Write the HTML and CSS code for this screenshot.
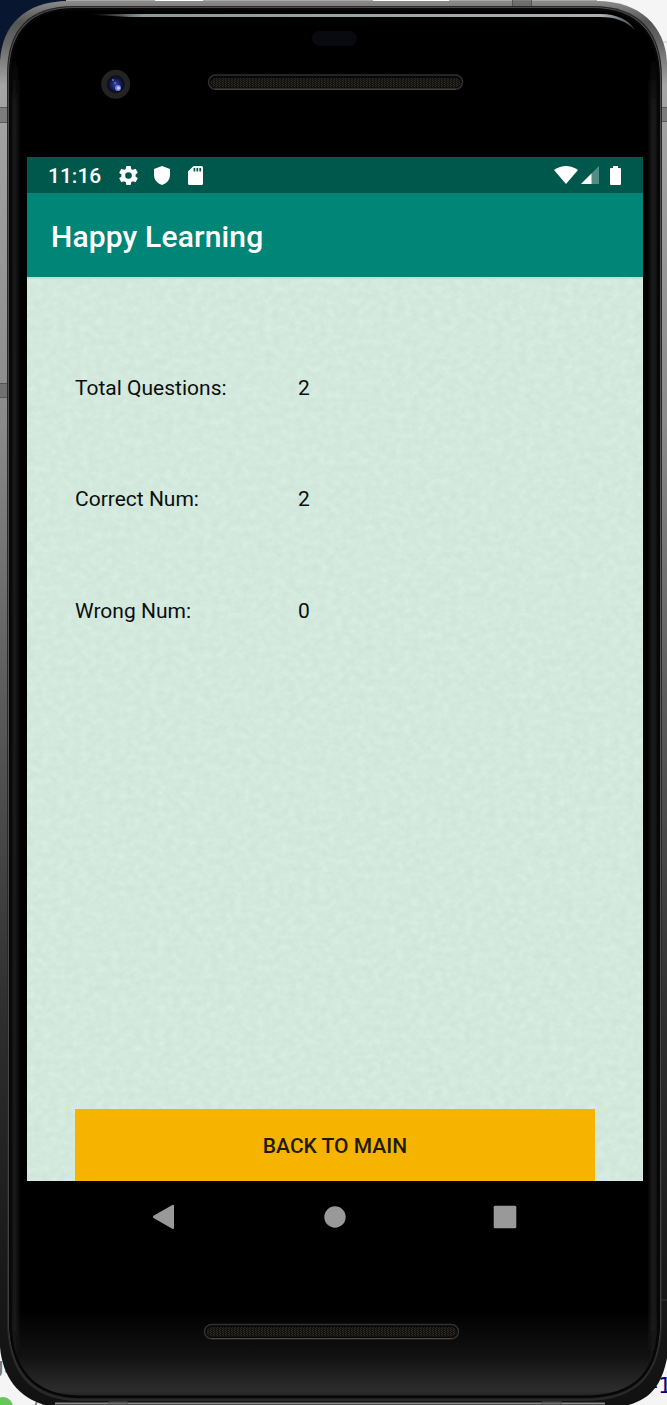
FILE: index.html
```html
<!DOCTYPE html>
<html lang="en">
<head>
<meta charset="utf-8">
<title>Happy Learning</title>
<link rel="stylesheet" href="styles.css">
</head>
<body>
<div class="device">
  <svg class="frame" viewBox="0 0 667 1405" aria-hidden="true">
    <defs>
      <linearGradient id="metal" x1="0" y1="0" x2="0" y2="1">
        <stop offset="0" stop-color="#8b8b8b"/><stop offset=".015" stop-color="#555"/><stop offset=".03" stop-color="#666"/><stop offset=".06" stop-color="#a5a5a5"/><stop offset=".3" stop-color="#8a8a8a"/><stop offset=".5" stop-color="#5a5a5a"/><stop offset=".72" stop-color="#2e2e2e"/><stop offset=".9" stop-color="#191919"/><stop offset="1" stop-color="#111"/>
      </linearGradient>
      <linearGradient id="rim" x1="0" y1="0" x2="0" y2="1">
        <stop offset="0" stop-color="#555"/><stop offset=".5" stop-color="#666"/><stop offset=".95" stop-color="#444"/><stop offset="1" stop-color="#1c1c1c"/>
      </linearGradient>
      <linearGradient id="chin" x1="0" y1="0" x2="0" y2="1">
        <stop offset="0" stop-color="#000"/><stop offset=".5" stop-color="#111"/><stop offset=".9" stop-color="#2d2d2d"/><stop offset="1" stop-color="#191919"/>
      </linearGradient>
      <linearGradient id="shine" gradientUnits="userSpaceOnUse" x1="88" y1="0" x2="636" y2="0">
        <stop offset="0" stop-color="#8d989a" stop-opacity="0"/><stop offset=".1" stop-color="#8d989a"/><stop offset=".94" stop-color="#aab0b2"/><stop offset="1" stop-color="#8d989a" stop-opacity=".5"/>
      </linearGradient>
      <radialGradient id="lens"><stop offset="0" stop-color="#3646a0"/><stop offset=".6" stop-color="#151c52"/><stop offset="1" stop-color="#080a18"/></radialGradient>
      <pattern id="mesh" width="3" height="2" patternUnits="userSpaceOnUse"><rect width="3" height="2" fill="#14120f"/><rect width="1" height="1" fill="#302d28"/><rect x="1" y="1" width="1" height="1" fill="#2b2924"/></pattern>
      <filter id="soft" filterUnits="userSpaceOnUse" x="0" y="0" width="667" height="1405"><feGaussianBlur stdDeviation="2.500 20"/></filter>
      <clipPath id="glass"><path id="inner" d="M9 74C9 31 31 8 74 8H593C637 8 660 33 660 78V1320C660 1372 638 1398 584 1398H80C33 1398 9 1370 9 1320Z"/></clipPath>
    </defs>
    <rect width="667" height="1405" fill="#f5f5f5"/>
    <path d="M0 0H70V3L0 65Z" fill="#08172f"/>
    <path d="M66 0H597V2H66Z" fill="#a9a9a9"/>
    <path d="M155 0H203V1H155ZM373 0H449V1H373Z" fill="#fff"/>
    <path d="M655 42H667" stroke="#ccc"/>
    <circle cx="3" cy="1407" r="10" fill="#67c65a"/>
    <text class="behind-grey" x="-10" y="1373">gs</text>
    <text class="behind-grey" x="33" y="1409">//</text>
    <text class="behind-code" x="650" y="1393">-1</text>
    <path d="M0 61C2 25 25 2 66 1H597C640 1 665 26 667 62V1358C661 1388 648 1405 610 1408H62C25 1405 3 1383 0 1347Z" fill="url(#metal)"/>
    <path d="M60 2.500H600M55 1403.500H605" stroke="#888" stroke-width="2"/>
    <g fill="#555" fill-opacity=".5" stroke="#444" stroke-opacity=".7">
      <path d="M-1 107.500H9V122.500H-1ZM-1 383.500H9V397.500H-1ZM660 107.500H668V121.500H660ZM512.500-1H531.500V8H512.500ZM109 1400H127V1406H109ZM542 1400H561V1406H542ZM660 1300H668"/>
    </g>
    <path d="M7 74C7 29 29 6 74 6H593C639 6 662 31 662 78V1320C662 1374 639 1401 584 1401H80C31 1401 7 1373 7 1320Z" fill="#292929"/>
    <use href="#inner" fill="#000" stroke="url(#rim)" stroke-width="1.500"/>
    <g clip-path="url(#glass)">
      <rect x="9" y="1310" width="651" height="90" fill="url(#chin)"/>
      <rect x="12" y="80" width="5" height="1270" fill="#222" filter="url(#soft)"/>
      <rect x="651" y="80" width="5" height="1270" fill="#282828" filter="url(#soft)"/>
      <use href="#inner" fill="none" stroke="#070707" stroke-width="5"/>
    </g>
    <path d="M88 14.500L130 14H600C617 14 629 20 635 30C626 21 616 17 600 17H130Z" fill="url(#shine)"/>
    <rect x="312" y="31" width="45" height="15" rx="7.500" fill="#080a10"/>
    <circle cx="115.700" cy="84.300" r="14.500" fill="#232323"/>
    <circle cx="115.700" cy="84.300" r="8.500" fill="url(#lens)" stroke="#101010"/>
    <circle cx="118" cy="88" r="3" fill="#6f83e8"/><circle cx="118.500" cy="88" r="1.500" fill="#c4d0ff"/><circle cx="113" cy="80" r="1" fill="#6377c6"/><circle cx="115" cy="83" r="1.200" fill="#5165bd"/>
    <g fill="#080808" stroke="#303030" stroke-width="1.500"><rect x="208.500" y="75" width="254" height="14.200" rx="7.100"/><rect x="204.500" y="1324.500" width="254" height="14.200" rx="7.100"/></g>
    <path d="M215 89.200H456M211 1338.500H452" stroke="#4c4a46"/>
    <g fill="url(#mesh)"><rect x="210.500" y="78" width="250" height="9.500" rx="4.700"/><rect x="206.500" y="1327" width="250" height="9.500" rx="4.700"/></g>
  </svg>

  <main class="screen">
    <header class="status">
      <span class="clock">11:16</span>
      <svg class="icon gear" viewBox="2 2 20 20"><path d="M19.430 12.980c.04-.32.07-.64.07-.98s-.03-.66-.07-.98l2.110-1.650a.5.500 0 0 0 .12-.64l-2-3.460a.5.500 0 0 0-.61-.22l-2.490 1a7.300 7.300 0 0 0-1.690-.98l-.38-2.650A.5.500 0 0 0 14 2h-4a.5.500 0 0 0-.49.420l-.38 2.650a7.700 7.700 0 0 0-1.690.98l-2.490-1a.5.500 0 0 0-.61.220l-2 3.460a.5.500 0 0 0 .12.640l2.110 1.650a7.900 7.900 0 0 0 0 1.960l-2.110 1.650a.5.500 0 0 0-.12.640l2 3.460a.5.500 0 0 0 .61.220l2.490-1c.52.400 1.080.73 1.690.98l.38 2.650A.5.500 0 0 0 10 22h4a.5.500 0 0 0 .49-.42l.38-2.650a7.700 7.700 0 0 0 1.690-.98l2.490 1a.5.500 0 0 0 .61-.22l2-3.460a.5.500 0 0 0-.12-.64zM12 15.500a3.500 3.500 0 1 1 0-7 3.500 3.500 0 0 1 0 7z"/></svg>
      <svg class="icon shield" viewBox="0 0 16 19"><path d="M8 0L16 3V9C16 14 12.500 17.500 8 19 3.500 17.500 0 14 0 9V3Z"/></svg>
      <svg class="icon card" viewBox="0 0 15 19"><path fill-rule="evenodd" d="M5.500 0H13.500Q15 0 15 1.500V17.500Q15 19 13.500 19H1.500Q0 19 0 17.500V5.500ZM5.600 2V5.500H7.300V2ZM8.500 2V5.500H10.200V2ZM11.400 2V5.500H13.100V2Z"/></svg>
      <span class="spacer"></span>
      <svg class="icon wifi" viewBox="0 0 24 18"><path d="M0 4Q12-4 24 4L12 18Z"/></svg>
      <svg class="icon signal" viewBox="0 0 18 18"><path opacity=".32" d="M18 0V18H0Z"/><path d="M10.500 7.500V18H0Z"/></svg>
      <svg class="icon battery" viewBox="0 0 11 19"><path d="M3 0H8V2H10Q11 2 11 3V18Q11 19 10 19H1Q0 19 0 18V3Q0 2 1 2H3Z"/></svg>
    </header>
    <h1 class="appbar">Happy Learning</h1>
    <section class="content">
      <svg class="paper" aria-hidden="true">
        <filter id="grain" x="0" y="0" width="100%" height="100%" color-interpolation-filters="sRGB">
          <feTurbulence type="fractalNoise" baseFrequency=".13 .15" numOctaves="3" seed="8"/>
          <feColorMatrix values=".065 0 0 0 .797  .05 0 0 0 .888  .06 0 0 0 .839  0 0 0 0 1"/>
        </filter>
        <rect width="100%" height="100%" filter="url(#grain)"/>
      </svg>
      <dl class="results">
        <dt>Total Questions:</dt><dd>2</dd>
        <dt>Correct Num:</dt><dd>2</dd>
        <dt>Wrong Num:</dt><dd>0</dd>
      </dl>
      <button class="back" type="button">BACK TO MAIN</button>
    </section>
  </main>
  <nav class="navbar">
    <svg viewBox="0 0 24 26"><path d="M1.500 11.800L20.300 1Q22 .3 22 2V24Q22 25.600 20.300 24.800L1.500 14Q0 13 1.500 11.800Z"/></svg>
    <svg viewBox="0 0 24 26"><circle cx="12" cy="13" r="10.700"/></svg>
    <svg viewBox="0 0 24 26"><rect x=".7" y="1.700" width="22.600" height="22.600" rx="1.500"/></svg>
  </nav>
</div>
</body>
</html>
```
FILE: styles.css
```css
* { box-sizing: border-box; }
body { margin: 0; overflow: hidden; background: #f5f5f5; font-family: Roboto, sans-serif; }
.device { position: relative; isolation: isolate; width: 667px; height: 1405px; padding: 157px 24px 0 27px; overflow: hidden; }
.frame { position: absolute; inset: 0; z-index: -1; width: 667px; height: 1405px; }
.behind-grey { font: 22px "DejaVu Sans", sans-serif; fill: #777; }
.behind-code { font: 22px "DejaVu Sans", sans-serif; fill: #000080; }
.screen { display: flex; flex-direction: column; width: 616px; height: 1024px; }
.status { display: flex; align-items: center; flex: none; height: 36px; padding: 0 22px 0 21px; background: #00574b; color: #fff; }
.clock { width: 71px; font-size: 21px; font-weight: 500; line-height: 36px; padding-top: 1px; }
.icon { display: block; fill: #fff; }
.gear { width: 19px; height: 19px; }
.shield { width: 16px; height: 19px; margin-left: 16px; }
.card { width: 15px; height: 19px; margin-left: 18px; }
.spacer { flex: 1; }
.wifi { width: 24px; height: 18px; }
.signal { width: 18px; height: 18px; margin-left: 3px; }
.battery { width: 11px; height: 19px; margin-left: 11px; }
.appbar { flex: none; height: 84px; margin: 0; padding: 0 24px; background: #008577; color: #fff; font-size: 30px; font-weight: 500; letter-spacing: .15px; line-height: 87px; }
.content { position: relative; isolation: isolate; display: flex; flex: 1; flex-direction: column; justify-content: space-between; padding: 55.500px 48px 0; background: #c8dcd2; }
.paper { position: absolute; inset: 2px 0 0; z-index: -1; width: 100%; height: calc(100% - 2px); }
.results { display: grid; grid-template-columns: 223px 1fr; grid-auto-rows: 111.300px; align-items: center; margin: 0; color: #0b0f0d; font-size: 21px; }
.results dd { margin: 0; }
.back { height: 72px; border: 0; padding: 2px 0 0; background: #f6b400; color: #1f1b0c; font: 500 21px Roboto, sans-serif; }
.navbar { display: flex; justify-content: space-between; align-items: center; height: 72px; padding: 0 126px 0 125px; }
.navbar svg { width: 24px; height: 26px; fill: #999; }
```
